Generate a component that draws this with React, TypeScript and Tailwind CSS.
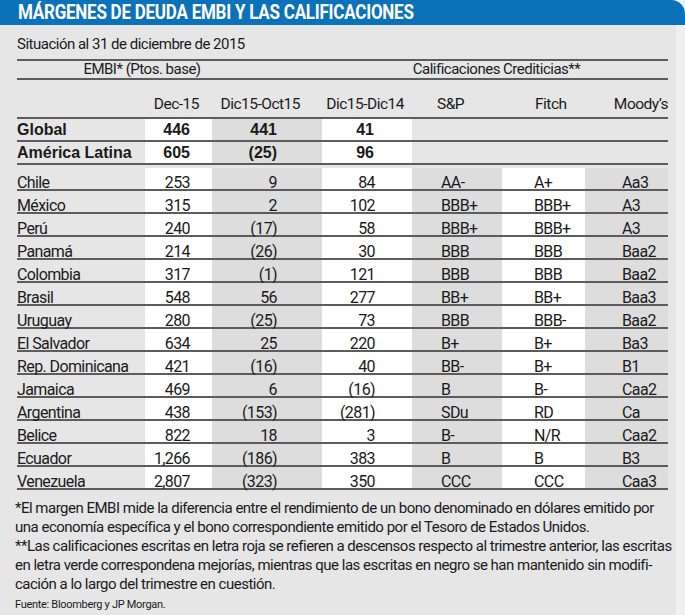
import React from 'react';

const rows = [
  ['Chile', '253', '9', '84', 'AA-', 'A+', 'Aa3'],
  ['México', '315', '2', '102', 'BBB+', 'BBB+', 'A3'],
  ['Perú', '240', '(17)', '58', 'BBB+', 'BBB+', 'A3'],
  ['Panamá', '214', '(26)', '30', 'BBB', 'BBB', 'Baa2'],
  ['Colombia', '317', '(1)', '121', 'BBB', 'BBB', 'Baa2'],
  ['Brasil', '548', '56', '277', 'BB+', 'BB+', 'Baa3'],
  ['Uruguay', '280', '(25)', '73', 'BBB', 'BBB-', 'Baa2'],
  ['El Salvador', '634', '25', '220', 'B+', 'B+', 'Ba3'],
  ['Rep. Dominicana', '421', '(16)', '40', 'BB-', 'B+', 'B1'],
  ['Jamaica', '469', '6', '(16)', 'B', 'B-', 'Caa2'],
  ['Argentina', '438', '(153)', '(281)', 'SDu', 'RD', 'Ca'],
  ['Belice', '822', '18', '3', 'B-', 'N/R', 'Caa2'],
  ['Ecuador', '1,266', '(186)', '383', 'B', 'B', 'B3'],
  ['Venezuela', '2,807', '(323)', '350', 'CCC', 'CCC', 'Caa3'],
];

const totals = [
  ['Global', '446', '441', '41'],
  ['América Latina', '605', '(25)', '96'],
];

function App() {
  return (
    <div className="w-[685px] h-[615px] overflow-hidden flex bg-[#efeff0] text-[#1a1a1a] font-['Roboto',sans-serif]">
      <div className="w-[676px] bg-[#e6e6e7]">
        <div className="w-[685px] h-[25px] bg-[#0b72b9] rounded-tr-[14px] pl-[18px] flex items-center">
          <h1 className="text-white text-[21px] font-bold leading-none tracking-[-0.3px] origin-left scale-x-[0.81] whitespace-nowrap">
            MÁRGENES DE DEUDA EMBI Y LAS CALIFICACIONES
          </h1>
        </div>

        <div className="pl-[17px] pr-[8px]">
          <p className="text-[15px] leading-[20px] tracking-[-0.5px] pt-[9px] pb-[5px]">Situación al 31 de diciembre de 2015</p>

          <div className="flex h-[21px] items-center border-y-2 border-[#5c5c5c] text-[15px] tracking-[-0.5px] whitespace-nowrap">
            <div className="w-[250px] text-center">EMBI* (Ptos. base)</div>
            <div className="w-[58px]" />
            <div className="flex-1 text-center">Calificaciones Crediticias**</div>
          </div>

          <div className="flex h-[39px] items-end pb-[5px] border-b-2 border-[#5c5c5c] text-[15.5px] leading-none tracking-[-0.5px] whitespace-nowrap">
            <div className="w-[128px]" />
            <div className="w-[67px] text-right pr-[13px]">Dec-15</div>
            <div className="w-[110px] text-right pr-[22px]">Dic15-Oct15</div>
            <div className="w-[90px] text-right pr-[8px]">Dic15-Dic14</div>
            <div className="w-[90px] pl-[25px]">S&amp;P</div>
            <div className="w-[83px] pl-[33px]">Fitch</div>
            <div className="flex-1 text-right">Moody’s</div>
          </div>

          {totals.map((t) => (
            <div key={ t[0] } className="flex h-[23px] border-b-2 border-[#5c5c5c] font-['Liberation_Sans',Arial,sans-serif] font-bold text-[16px] whitespace-nowrap">
              <div className="w-[128px] flex items-center">{t[0]}</div>
              <div className="w-[67px] bg-white flex items-center justify-end pr-[22px]">{t[1]}</div>
              <div className="w-[110px] bg-[#dddddd] flex items-center justify-end pr-[45px]">{t[2]}</div>
              <div className="w-[90px] bg-white flex items-center justify-end pr-[38px]">{t[3]}</div>
              <div className="flex-1" />
            </div>
          ))}

          <div className="mt-[3px] text-[16px] leading-[12px] tracking-[-0.6px] whitespace-nowrap">
            {rows.map((r) => (
              <div key={ r[0] } className="flex h-[23px] border-b-2 border-[#5c5c5c]">
                <div className="w-[128px] flex items-end">{r[0]}</div>
                <div className="w-[67px] bg-white flex items-end justify-end pr-[22px]">{r[1]}</div>
                <div className="w-[110px] bg-[#dddddd] flex items-end justify-end pr-[45px]">{r[2]}</div>
                <div className="w-[90px] bg-white flex items-end justify-end pr-[37px]">{r[3]}</div>
                <div className="w-[90px] bg-[#dddddd] flex items-end pl-[29px]">{r[4]}</div>
                <div className="w-[83px] bg-white flex items-end pl-[32px]">{r[5]}</div>
                <div className="flex-1 bg-[#dddddd] flex items-end pl-[37px]">{r[6]}</div>
              </div>
            ))}
          </div>
        </div>

        <div className="pl-[15px] pt-[9px] text-[15px] leading-[19px] tracking-[-0.5px] whitespace-nowrap">
          <p>
            *El margen EMBI mide la diferencia entre el rendimiento de un bono denominado en dólares emitido por
            <br />
            una economía específica y el bono correspondiente emitido por el Tesoro de Estados Unidos.
          </p>
          <p>
            **Las calificaciones escritas en letra roja se refieren a descensos respecto al trimestre anterior, las escritas
            <br />
            en letra verde correspondena mejorías, mientras que las escritas en negro se han mantenido sin modifi-
            <br />
            cación a lo largo del trimestre en cuestión.
          </p>
          <p className="text-[11px] leading-[14px] mt-[4px] tracking-[-0.3px]">Fuente: Bloomberg y JP Morgan.</p>
        </div>
      </div>
    </div>
  );
}

export default App;
